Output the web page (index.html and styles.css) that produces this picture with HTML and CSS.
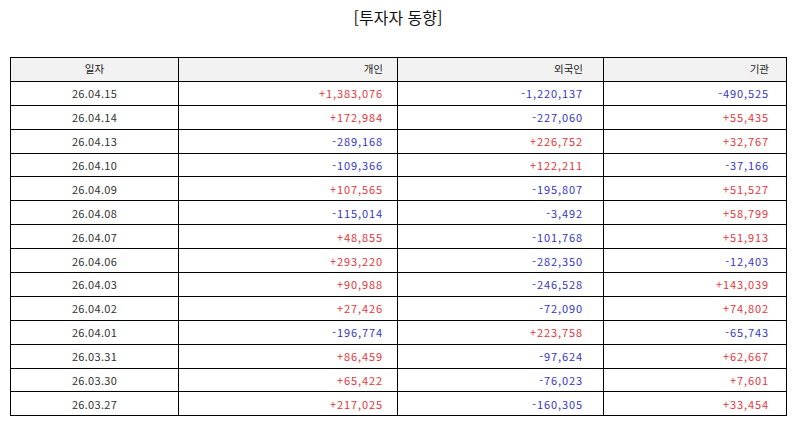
FILE: index.html
```html
<!DOCTYPE html>
<html lang="ko">
<head>
<meta charset="utf-8">
<link rel="stylesheet" href="styles.css">
</head>
<body>
<div class="page">
  <h1 class="title">[투자자 동향]</h1>
  <table class="grid">
    <colgroup>
      <col class="c1"><col class="c2"><col class="c3"><col class="c4">
    </colgroup>
    <thead>
      <tr><th class="date">일자</th><th class="n2">개인</th><th class="n3">외국인</th><th class="n4">기관</th></tr>
    </thead>
    <tbody>
      <tr><td class="date">26.04.15</td><td class="n2 up">+1,383,076</td><td class="n3 dn">-1,220,137</td><td class="n4 dn">-490,525</td></tr>
      <tr><td class="date">26.04.14</td><td class="n2 up">+172,984</td><td class="n3 dn">-227,060</td><td class="n4 up">+55,435</td></tr>
      <tr><td class="date">26.04.13</td><td class="n2 dn">-289,168</td><td class="n3 up">+226,752</td><td class="n4 up">+32,767</td></tr>
      <tr><td class="date">26.04.10</td><td class="n2 dn">-109,366</td><td class="n3 up">+122,211</td><td class="n4 dn">-37,166</td></tr>
      <tr><td class="date">26.04.09</td><td class="n2 up">+107,565</td><td class="n3 dn">-195,807</td><td class="n4 up">+51,527</td></tr>
      <tr><td class="date">26.04.08</td><td class="n2 dn">-115,014</td><td class="n3 dn">-3,492</td><td class="n4 up">+58,799</td></tr>
      <tr><td class="date">26.04.07</td><td class="n2 up">+48,855</td><td class="n3 dn">-101,768</td><td class="n4 up">+51,913</td></tr>
      <tr><td class="date">26.04.06</td><td class="n2 up">+293,220</td><td class="n3 dn">-282,350</td><td class="n4 dn">-12,403</td></tr>
      <tr><td class="date">26.04.03</td><td class="n2 up">+90,988</td><td class="n3 dn">-246,528</td><td class="n4 up">+143,039</td></tr>
      <tr><td class="date">26.04.02</td><td class="n2 up">+27,426</td><td class="n3 dn">-72,090</td><td class="n4 up">+74,802</td></tr>
      <tr><td class="date">26.04.01</td><td class="n2 dn">-196,774</td><td class="n3 up">+223,758</td><td class="n4 dn">-65,743</td></tr>
      <tr><td class="date">26.03.31</td><td class="n2 up">+86,459</td><td class="n3 dn">-97,624</td><td class="n4 up">+62,667</td></tr>
      <tr><td class="date">26.03.30</td><td class="n2 up">+65,422</td><td class="n3 dn">-76,023</td><td class="n4 up">+7,601</td></tr>
      <tr><td class="date">26.03.27</td><td class="n2 up">+217,025</td><td class="n3 dn">-160,305</td><td class="n4 up">+33,454</td></tr>
    </tbody>
  </table>
</div>
</body>
</html>
```
FILE: styles.css
```css
html, body {
  margin: 0;
  padding: 0;
  background: #ffffff;
}
.page {
  padding: 5px 0 0 10px;
  font-family: "Noto Sans CJK KR", "Noto Sans", sans-serif;
  color: #222222;
}
.title {
  margin: 0;
  width: 776px;
  height: 52px;
  text-align: center;
  font-size: 16px;
  font-weight: normal;
  line-height: 24px;
  color: #111111;
}
.grid {
  border-collapse: collapse;
  table-layout: fixed;
  width: 776px;
  font-size: 11px;
}
.c1 { width: 168px; }
.c2 { width: 219px; }
.c3 { width: 206px; }
.c4 { width: 183px; }
.grid th, .grid td {
  border: 1px solid #000000;
  height: 22.9px;
  padding: 0;
  line-height: 14px;
  white-space: nowrap;
}
.grid th {
  background: #f2f2f2;
  font-weight: normal;
  font-size: 10.5px;
  color: #222222;
}
.grid td.date {
  letter-spacing: 0.3px;
}
.grid td.up, .grid td.dn {
  letter-spacing: 0.9px;
}
.date { text-align: center; color: #333333; }
.n2 { text-align: right; padding-right: 14px !important; }
.n3 { text-align: right; padding-right: 20px !important; }
.n4 { text-align: right; padding-right: 17px !important; }
.up { color: #e8333b; }
.dn { color: #3535c8; }
```
